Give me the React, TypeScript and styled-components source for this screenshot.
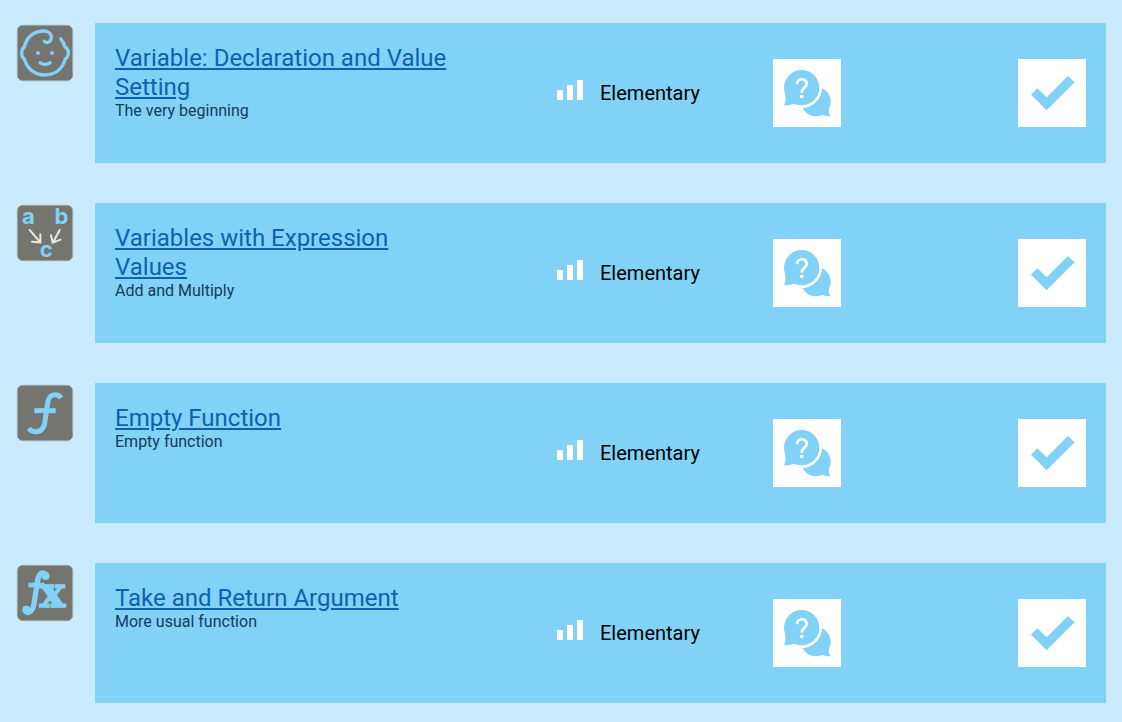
import React from "react";
import styled, { createGlobalStyle } from "styled-components";

const GlobalStyle = createGlobalStyle`
  *, *::before, *::after { box-sizing: border-box; }
  body {
    margin: 0;
    background: #c9ebfd;
    color: #000;
    font-family: Roboto, "Liberation Sans", sans-serif;
  }
`;

const sky = "#82d1f6";
const stone = "#757570";

const LessonList = styled.ul`
  margin: 0;
  padding: 23px 16px 19px;
  list-style: none;
  display: flex;
  flex-direction: column;
  gap: 40px;
`;

const LessonRow = styled.li`
  display: grid;
  grid-template-columns: 58px minmax(0, 1fr);
  column-gap: 21px;
`;

const Badge = styled.svg`
  display: block;
  width: 58px;
  height: 58px;
  margin-top: 1px;
`;

const Card = styled.article`
  min-height: 140px;
  padding: 20px;
  background: ${sky};
  display: grid;
  grid-template-columns: 442fr 216fr 313fr;
  align-items: center;
`;

const Summary = styled.div`
  align-self: start;
  padding: 1px 100px 0 0;
`;

const Title = styled.h2`
  margin: 0;
  font-size: 24px;
  line-height: 29px;
  font-weight: 400;
`;

const TitleLink = styled.a`
  color: #0d62b0;
  text-decoration: underline;
`;

const Subtitle = styled.p`
  margin: 0;
  color: #143c5c;
  font-size: 16px;
  line-height: 17px;
`;

const Level = styled.div`
  display: flex;
  align-items: center;
  gap: 16px;
  font-size: 20px;
  line-height: 24px;
`;

const LevelBars = styled.svg`
  flex: none;
  width: 27px;
  height: 26px;
`;

const Actions = styled.div`
  display: flex;
  justify-content: space-between;
`;

const ActionButton = styled.button`
  width: 68px;
  height: 68px;
  padding: 0;
  border: 0;
  background: #fff;
  cursor: pointer;

  svg {
    display: block;
    width: 68px;
    height: 68px;
  }
`;

function BadgeFrame({ children }: { children: React.ReactNode }) {
  return (
    <Badge viewBox="-3 -3 174 174" aria-hidden="true">
      <rect x="1" y="1" width="166" height="166" rx="16" fill={stone} stroke="#9aa5a8" strokeWidth="3" />
      {children}
    </Badge>
  );
}

function BabyBadge() {
  return (
    <BadgeFrame>
      <g fill="none" stroke={sky} strokeWidth="10" strokeLinecap="round" strokeLinejoin="round">
        <path d="M82 49 C88 56 103 52 103 37 C103 23 90 17 78 18 C49 20 29 37 22 66 C17 69 14 77 14 84 C14 92 17 99 22 102 C31 133 55 150 83 150 C113 150 136 132 145 102 C150 99 154 92 154 84 C154 77 150 69 144 66 C141 56 137 48 131 41" />
        <path d="M69 113 C77 120 91 120 99 113" />
      </g>
      <circle cx="63" cy="84" r="6" fill={sky} />
      <circle cx="105" cy="84" r="6" fill={sky} />
    </BadgeFrame>
  );
}

function ExpressionBadge() {
  return (
    <BadgeFrame>
      <g fill={sky} fontFamily='Inter, "Liberation Sans", sans-serif' fontWeight="700" fontSize="66" textAnchor="middle">
        <text x="34" y="57">a</text>
        <text x="133" y="57">b</text>
        <text x="88" y="156">c</text>
      </g>
      <g fill="none" stroke="#e6e6e2" strokeWidth="6" strokeLinecap="round">
        <path d="M38 75 L68 110 M70 88 V112 L45 110" />
        <path d="M128 75 L109 111 M102 91 L107 113 L131 104" />
      </g>
    </BadgeFrame>
  );
}

function FunctionBadge() {
  return (
    <BadgeFrame>
      <g fill="none" stroke={sky} strokeWidth="15">
        <path d="M133 39 C122 25 98 25 93 48 L83 116 C77 143 50 147 35 130" />
        <path d="M52 77 H116" />
      </g>
    </BadgeFrame>
  );
}

function FormulaBadge() {
  return (
    <BadgeFrame>
      <g fill="none" stroke={sky} strokeLinecap="round">
        <path d="M88 30 C78 18 66 24 62 46 L51 116 C46 142 31 149 25 137" strokeWidth="16" />
        <path d="M34 60 H82" strokeWidth="14" strokeLinecap="butt" />
      </g>
      <circle cx="86" cy="33" r="12" fill={sky} />
      <circle cx="28" cy="134" r="12" fill={sky} />
      <text
        x="68"
        y="125"
        fill={sky}
        stroke={sky}
        strokeWidth="5"
        fontFamily='"DejaVu Serif", serif'
        fontWeight="700"
        fontSize="128"
      >
        x
      </text>
    </BadgeFrame>
  );
}

function QuestionIcon() {
  return (
    <svg viewBox="0 0 204 204" aria-hidden="true">
      <circle cx="129" cy="128" r="44" fill={sky} />
      <path d="M168 145 C166 158 168 166 173 172 C162 172 154 171 146 166 Z" fill={sky} />
      <circle cx="86" cy="86" r="61" fill="#fff" />
      <circle cx="86" cy="86" r="53" fill={sky} />
      <path d="M36 104 C39 118 38 130 33 139 C45 139 56 138 64 132 Z" fill={sky} />
      <path d="M72 76 C72 56 102 56 101 75 C101 86 86 87 86 101" fill="none" stroke="#fff" strokeWidth="8" />
      <rect x="81" y="108" width="10" height="9" fill="#fff" />
    </svg>
  );
}

function CheckIcon() {
  return (
    <svg viewBox="0 0 204 204" aria-hidden="true">
      <path d="M39 107 L58 88 L86 115 L150 51 L170 70 L86 154 Z" fill={sky} />
    </svg>
  );
}

interface Lesson {
  title: string;
  subtitle: string;
  level: string;
  badge: React.ReactNode;
}

const lessons: Lesson[] = [
  {
    title: "Variable: Declaration and Value Setting",
    subtitle: "The very beginning",
    level: "Elementary",
    badge: <BabyBadge />,
  },
  {
    title: "Variables with Expression Values",
    subtitle: "Add and Multiply",
    level: "Elementary",
    badge: <ExpressionBadge />,
  },
  { title: "Empty Function", subtitle: "Empty function", level: "Elementary", badge: <FunctionBadge /> },
  {
    title: "Take and Return Argument",
    subtitle: "More usual function",
    level: "Elementary",
    badge: <FormulaBadge />,
  },
];

export default function App() {
  return (
    <main>
      <GlobalStyle />
      <LessonList>
        {lessons.map((lesson) => (
          <LessonRow key={lesson.title}>
            {lesson.badge}
            <Card>
              <Summary>
                <Title>
                  <TitleLink href="#">{lesson.title}</TitleLink>
                </Title>
                <Subtitle>{lesson.subtitle}</Subtitle>
              </Summary>
              <Level>
                <LevelBars viewBox="0 0 27 26" fill="#fff" aria-hidden="true">
                  <rect x="0" y="10" width="6" height="10" />
                  <rect x="10" y="5" width="6" height="15" />
                  <rect x="20" y="0" width="6" height="20" />
                </LevelBars>
                {lesson.level}
              </Level>
              <Actions>
                <ActionButton type="button" aria-label="Ask a question">
                  <QuestionIcon />
                </ActionButton>
                <ActionButton type="button" aria-label="Mark as done">
                  <CheckIcon />
                </ActionButton>
              </Actions>
            </Card>
          </LessonRow>
        ))}
      </LessonList>
    </main>
  );
}
